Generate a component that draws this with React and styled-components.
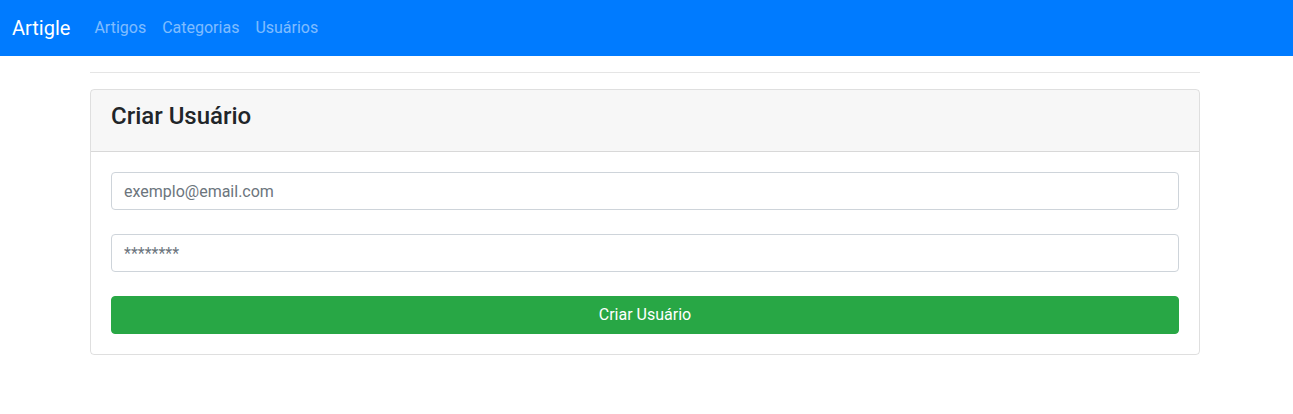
import React from 'react';
import styled, { createGlobalStyle } from 'styled-components';

// GLOBAL
const Global = createGlobalStyle`
  * { box-sizing: border-box; }
  body {
    margin: 0;
    font-family: Roboto, "Liberation Sans", sans-serif;
    font-size: 16px;
    line-height: 1.5;
    color: #212529;
    background: #fff;
  }
`;

// STYLES
const Navbar = styled.nav`
  display: flex;
  align-items: center;
  height: 56px;
  padding: 8px 12px;
  background: #007bff;
`;

const Brand = styled.a`
  font-size: 20px;
  line-height: 30px;
  padding: 5px 0;
  margin-right: 16px;
  color: #fff;
  text-decoration: none;
`;

const NavLink = styled.a`
  padding: 8px;
  color: rgba(255, 255, 255, 0.5);
  text-decoration: none;
`;

const Container = styled.main`
  width: 1110px;
  margin-left: 90px;
  padding-top: 16px;
`;

const Rule = styled.hr`
  margin: 0 0 16px;
  border: 0;
  border-top: 1px solid rgba(0, 0, 0, 0.1);
`;

const Card = styled.section`
  border: 1px solid rgba(0, 0, 0, 0.125);
  border-radius: 4px;
`;

const CardHeader = styled.header`
  padding: 12px 20px;
  background: rgba(0, 0, 0, 0.03);
  border-bottom: 1px solid rgba(0, 0, 0, 0.125);
  border-radius: 3px 3px 0 0;
`;

const Title = styled.h4`
  margin: 0 0 8px;
  font-size: 24px;
  line-height: 29px;
  font-weight: 500;
`;

const CardBody = styled.form`
  display: flex;
  flex-direction: column;
  gap: 24px;
  padding: 20px;
`;

const Input = styled.input`
  display: block;
  width: 100%;
  height: 38px;
  padding: 6px 12px;
  font: inherit;
  color: #495057;
  border: 1px solid #ced4da;
  border-radius: 4px;
  &::placeholder { color: #6c757d; opacity: 1; }
`;

const Button = styled.button`
  display: block;
  width: 100%;
  height: 38px;
  font: inherit;
  color: #fff;
  background: #28a745;
  border: 1px solid #28a745;
  border-radius: 4px;
`;

// COMPONENT
const App = () => (
  <>
    <Global />
    <Navbar>
      <Brand href="#">Artigle</Brand>
      <NavLink href="#">Artigos</NavLink>
      <NavLink href="#">Categorias</NavLink>
      <NavLink href="#">Usuários</NavLink>
    </Navbar>
    <Container>
      <Rule />
      <Card>
        <CardHeader>
          <Title>Criar Usuário</Title>
        </CardHeader>
        <CardBody onSubmit={e => e.preventDefault()}>
          <Input type="email" placeholder="exemplo@email.com" />
          <Input type="password" placeholder="********" />
          <Button type="submit">Criar Usuário</Button>
        </CardBody>
      </Card>
    </Container>
  </>
);

export default App;
